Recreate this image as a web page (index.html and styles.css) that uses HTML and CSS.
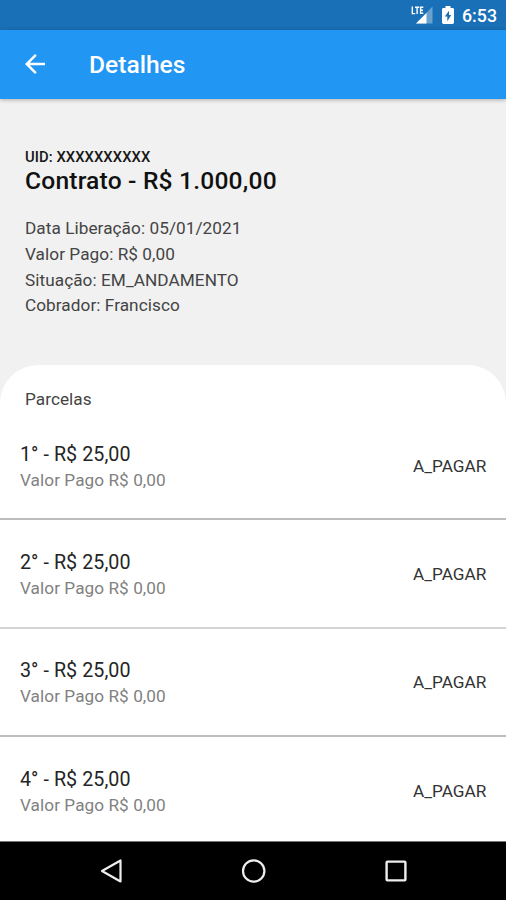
FILE: index.html
```html
<!DOCTYPE html>
<html lang="pt-BR">
<head>
<meta charset="utf-8">
<title>Detalhes</title>
<link rel="stylesheet" href="styles.css">
</head>
<body>
<div class="screen">
  <div class="status">
    <svg class="signal" width="23" height="20" viewBox="0 0 23 20">
      <path d="M21.500 1.500V18.500H5z" fill="#fff" opacity=".35"/>
      <path d="M15.500 8V18.500H5z" fill="#fff"/>
      <path d="M1.300 1.500V8.600H4.200M4 2.300H8.200M6.100 2.300V9M12.300 2.300H9.600V8.300H12.300M9.600 5.300H12" fill="none" stroke="#fff" stroke-width="1.400"/>
    </svg>
    <svg class="battery" width="12" height="18" viewBox="0 0 12 19" preserveAspectRatio="none">
      <path fill="#fff" fill-rule="evenodd" d="M3.500 0h5v2h2q1.500 0 1.500 1.500v14q0 1.500-1.500 1.500h-9q-1.500 0-1.500-1.500V3.500Q0 2 1.500 2h2zM7 5L2.800 11.200H5.300V16L9.300 9.500H7z"/>
    </svg>
    <span class="clock">6:53</span>
  </div>
  <header class="appbar">
    <svg width="30" height="30" viewBox="0 0 24 24"><path fill="#fff" d="M20 11H7.830l5.590-5.590L12 4l-8 8 8 8 1.410-1.410L7.830 13H20v-2z"/></svg>
    <h1>Detalhes</h1>
  </header>
  <section class="summary">
    <div class="uid">UID: XXXXXXXXXX</div>
    <h2>Contrato - R$ 1.000,00</h2>
    <div class="facts">
      <div>Data Liberação: 05/01/2021</div>
      <div>Valor Pago: R$ 0,00</div>
      <div>Situação: EM_ANDAMENTO</div>
      <div>Cobrador: Francisco</div>
    </div>
  </section>
  <main class="sheet">
    <div class="label">Parcelas</div>
    <div class="row"><div><div class="title">1° - R$ 25,00</div><div class="sub">Valor Pago R$ 0,00</div></div><span class="state">A_PAGAR</span></div>
    <div class="row light"><div><div class="title">2° - R$ 25,00</div><div class="sub">Valor Pago R$ 0,00</div></div><span class="state">A_PAGAR</span></div>
    <div class="row"><div><div class="title">3° - R$ 25,00</div><div class="sub">Valor Pago R$ 0,00</div></div><span class="state">A_PAGAR</span></div>
    <div class="row"><div><div class="title">4° - R$ 25,00</div><div class="sub">Valor Pago R$ 0,00</div></div><span class="state">A_PAGAR</span></div>
  </main>
  <nav class="nav">
    <svg width="24" height="28" viewBox="0 0 24 28"><path d="M2 14L20.500 3.500V24.500z" fill="none" stroke="#eee" stroke-width="2.200" stroke-linejoin="round"/></svg>
    <svg width="26" height="28" viewBox="0 0 26 28"><circle cx="12.700" cy="14" r="10.700" fill="none" stroke="#eee" stroke-width="2.200"/></svg>
    <svg width="24" height="28" viewBox="0 0 24 28"><rect x="2.600" y="4.600" width="18.800" height="18.800" rx=".8" fill="none" stroke="#eee" stroke-width="2.400"/></svg>
  </nav>
</div>
</body>
</html>
```
FILE: styles.css
```css
* { box-sizing: border-box; }
body { margin: 0; font-family: Roboto, "Liberation Sans", sans-serif; color: #212121; }
.screen { width: 506px; height: 900px; display: flex; flex-direction: column; overflow: hidden; background: #f1f1f1; }
.status { height: 30px; flex: none; display: flex; align-items: center; justify-content: flex-end; padding-right: 9px; background: #1a70b6; color: #fff; }
.signal { margin: 0 8px 0 0; }
.battery { margin: 0 8px 0 0; }
.clock { font-size: 17.800px; font-weight: 500; line-height: 20px; padding-top: 1px; }
.appbar { height: 69px; flex: none; display: flex; align-items: center; gap: 39px; padding: 0 0 1px 20px; background: #2196f3; color: #fff; box-shadow: 0 1px 4px rgba(0,0,0,.28); position: relative; }
.appbar h1 { margin: 2px 0 0; font-size: 24.600px; font-weight: 500; line-height: 30px; }
.summary { height: 266px; flex: none; padding: 48px 25px 0; }
.uid { font-size: 14.770px; font-weight: 500; line-height: 20px; letter-spacing: .07px; color: #161616; }
.summary h2 { margin: 0; font-size: 24.600px; font-weight: 500; line-height: 28px; letter-spacing: .19px; color: #111; }
.facts { margin-top: 21px; font-size: 17.200px; line-height: 25.800px; letter-spacing: .06px; color: #444; }
.sheet { flex: 1; min-height: 0; overflow: hidden; background: #fff; border-radius: 38px 38px 0 0; }
.label { padding: 23px 25px 0; height: 47px; font-size: 17.200px; line-height: 22px; letter-spacing: .04px; color: #444; }
.row { height: 108.300px; display: flex; align-items: center; justify-content: space-between; padding: 4px 19.500px 0 20px; border-bottom: 2px solid #bdbdbd; }
.row.light { border-bottom-color: #d4d4d4; }
.title { font-size: 19.700px; line-height: 26px; letter-spacing: .06px; color: #252525; }
.sub { font-size: 17.200px; line-height: 25px; letter-spacing: .06px; color: #818181; }
.state { margin-bottom: 3px; font-size: 17.200px; letter-spacing: .04px; color: #333; }
.nav { height: 59px; flex: none; display: flex; align-items: center; justify-content: space-between; padding: 0 98px 0 100px; background: #000; border-top: 1px solid #777; }
```
